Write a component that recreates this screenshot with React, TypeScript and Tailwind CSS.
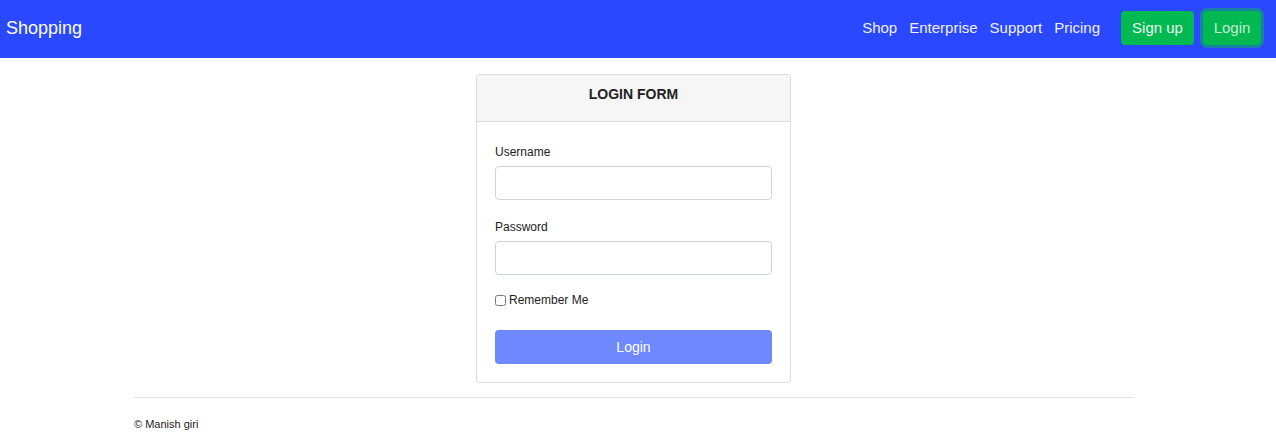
import React from "react";

export default function App() {
  return (
    <div className="min-h-[442px] bg-white font-['Liberation_Sans',Arial,sans-serif] text-[#212529]">
      <nav className="flex h-[58px] items-center bg-[#2a48ff] pb-[2px] pl-[6px] pr-[15px]">
        <span className="text-[18px] text-white">Shopping</span>
        <div className="ml-auto flex items-center">
          <div className="flex items-center gap-[12px] text-[15px] text-[#f0f0ff]">
            <span>Shop</span>
            <span>Enterprise</span>
            <span>Support</span>
            <span>Pricing</span>
          </div>
          <button className="ml-[21px] h-[34px] w-[73px] rounded-[4px] bg-[#00b950] text-[15px] text-[#eefcf2]">
            Sign up
          </button>
          <button className="ml-[9px] h-[34px] w-[58px] rounded-[4px] bg-[#00b950] text-[15px] text-[#c9e9d2] ring-[3px] ring-[#1a80a8]">
            Login
          </button>
        </div>
      </nav>

      <div className="ml-[134px] w-[1000px]">
        <div className="ml-[342px] mt-[16px] w-[315px] rounded-[3px] border border-[#dcdcdc]">
          <div className="h-[47px] border-b border-[#dcdcdc] bg-[#f6f6f6] pt-[11px] text-center text-[14px] font-bold leading-[16px] text-[#222]">
            LOGIN FORM
          </div>
          <div className="px-[18px] pb-[18px] pt-[23px]">
            <label className="block text-[12px] leading-[14px] text-[#222]">Username</label>
            <input className="mt-[7px] block h-[34px] w-[277px] rounded-[4px] border border-[#cfd4da] bg-white" />
            <label className="mt-[20px] block text-[12px] leading-[14px] text-[#222]">Password</label>
            <input type="password" className="mt-[7px] block h-[34px] w-[277px] rounded-[4px] border border-[#cfd4da] bg-white" />
            <div className="mt-[18px] flex items-center gap-[3px] text-[12px] leading-[14px] text-[#222]">
              <input type="checkbox" className="m-0 h-[11px] w-[11px]" />
              <span>Remember Me</span>
            </div>
            <button className="mt-[23px] block h-[34px] w-[277px] rounded-[4px] bg-[#6f87ff] text-[14px] text-white">
              Login
            </button>
          </div>
        </div>

        <div className="mt-[14px] border-t border-[#e2e2e2] pt-[18px] text-[11px] text-[#222]">
          © Manish giri
        </div>
      </div>
    </div>
  );
}
